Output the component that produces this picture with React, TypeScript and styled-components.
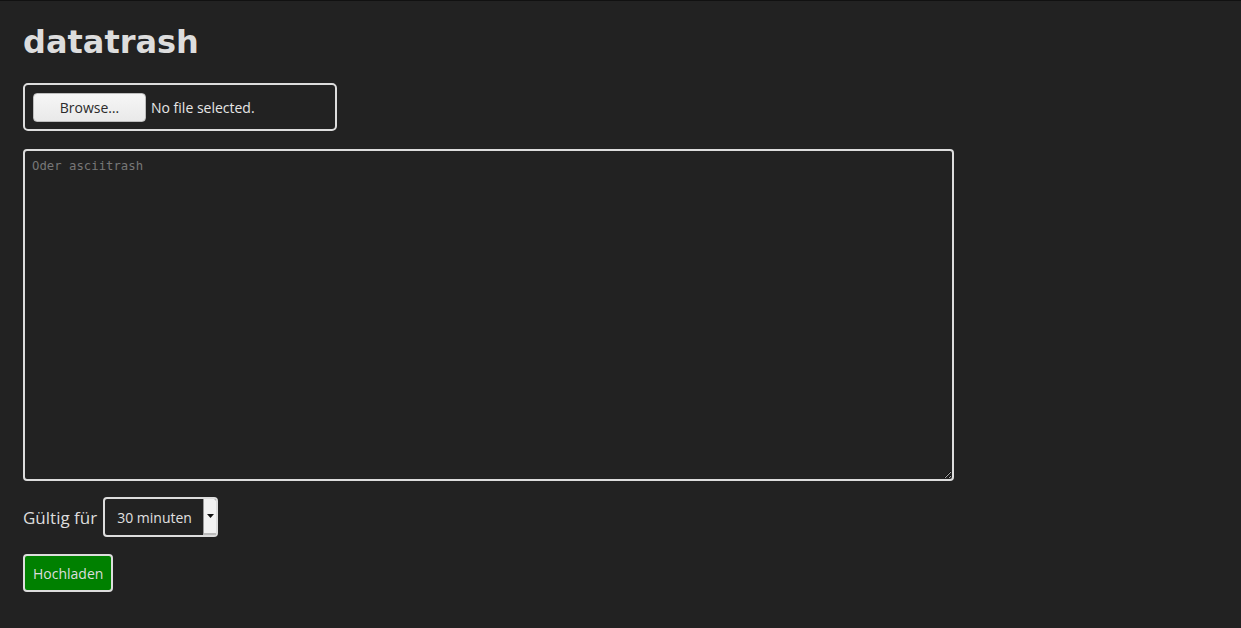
import React from "react";
import styled, { createGlobalStyle } from "styled-components";

const Global = createGlobalStyle`
  html, body { margin: 0; padding: 0; background: #222222; }
  body {
    border-top: 1px solid #111111;
    color: #dddddd;
    font-family: "Open Sans", "Noto Sans", sans-serif;
    min-height: 627px;
  }
`;

const Page = styled.main`
  padding: 0 23px;
  display: flex;
  flex-direction: column;
  align-items: flex-start;
`;

const Title = styled.h1`
  margin: 23px 0 22px;
  font-family: "DejaVu Sans", sans-serif;
  font-weight: bold;
  font-size: 32px;
  line-height: 37px;
  color: #dddddd;
`;

const FileBox = styled.label`
  box-sizing: border-box;
  width: 314px;
  height: 48px;
  border: 2px solid #dddddd;
  border-radius: 5px;
  padding: 0 8px;
  display: flex;
  align-items: center;
  gap: 5px;
  font-size: 14px;
`;

const BrowseButton = styled.span`
  box-sizing: border-box;
  width: 113px;
  height: 29px;
  border: 1px solid #bdbdbd;
  border-radius: 4px;
  background: linear-gradient(#f6f6f6, #e9e9e9);
  color: #2b2b2b;
  display: flex;
  align-items: center;
  justify-content: center;
  font-size: 14px;
`;

const FileLabel = styled.span`
  color: #e6e6e6;
`;

const TextArea = styled.textarea`
  box-sizing: border-box;
  margin-top: 18px;
  width: 931px;
  height: 332px;
  background: #222222;
  border: 2px solid #dddddd;
  border-radius: 4px;
  color: #dddddd;
  padding: 7px 7px;
  font-family: "DejaVu Sans Mono", monospace;
  font-size: 12.3px;
  line-height: 17px;
  outline: none;
  &::placeholder { color: #777777; }
`;

const Row = styled.div`
  margin-top: 16px;
  display: flex;
  align-items: center;
  gap: 6px;
  font-size: 17px;
`;

const SelectBox = styled.div`
  box-sizing: border-box;
  width: 115px;
  height: 40px;
  border: 2px solid #dddddd;
  border-radius: 4px;
  display: flex;
  align-items: stretch;
  font-size: 14px;
  overflow: hidden;
`;

const SelectValue = styled.span`
  flex: 1;
  display: flex;
  align-items: center;
  padding-left: 12px;
  color: #e0e0e0;
`;

const SelectArrow = styled.span`
  width: 12px;
  background: #f2f2f2;
  border-left: 1px solid #9a9a9a;
  border-bottom: 2px solid #bbbbbb;
  display: flex;
  align-items: center;
  justify-content: center;
`;

const Submit = styled.button`
  margin-top: 17px;
  box-sizing: border-box;
  height: 38px;
  padding: 0 8px;
  background: #008000;
  border: 2px solid #dddddd;
  border-radius: 4px;
  color: #dddddd;
  font-family: "Open Sans", "Noto Sans", sans-serif;
  font-size: 14px;
`;

export default function App() {
  return (
    <>
      <Global />
      <Page>
        <Title>datatrash</Title>
        <FileBox>
          <BrowseButton>Browse…</BrowseButton>
          <FileLabel>No file selected.</FileLabel>
        </FileBox>
        <TextArea placeholder="Oder asciitrash" />
        <Row>
          <span>Gültig für</span>
          <SelectBox>
            <SelectValue>30 minuten</SelectValue>
            <SelectArrow>
              <svg width="7" height="4" viewBox="0 0 7 4">
                <path d="M0 0h7L3.5 4z" fill="#111" />
              </svg>
            </SelectArrow>
          </SelectBox>
        </Row>
        <Submit>Hochladen</Submit>
      </Page>
    </>
  );
}
